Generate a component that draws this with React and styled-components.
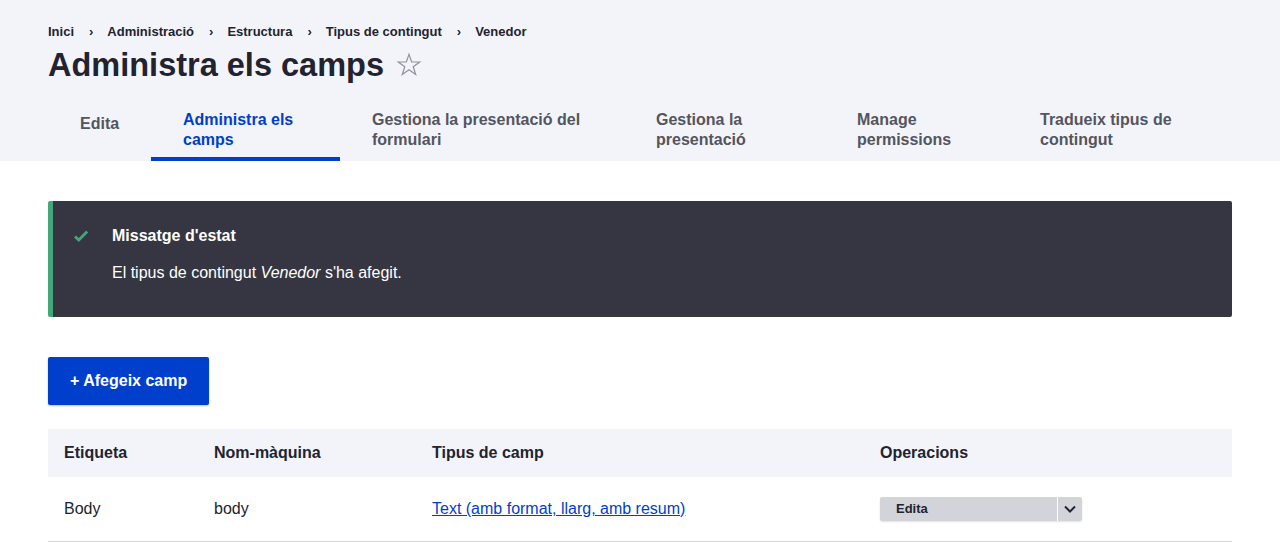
import styled, { createGlobalStyle } from 'styled-components';

const GlobalStyle = createGlobalStyle`
  body {
    margin: 0;
    background: #fff;
    font-family: "Liberation Sans", Arial, sans-serif;
    color: #222330;
  }
`;

const Header = styled.header`
  background: #f3f4f9;
  padding: 22px 48px 0;
`;

const Breadcrumb = styled.nav`
  display: flex;
  align-items: center;
  font-size: 13px;
  font-weight: 700;
  line-height: 20px;
  color: #222330;
`;

const Crumb = styled.span`
  display: flex;
  align-items: center;

  & + &::before {
    content: '›';
    font-weight: 700;
    padding: 0 14px 0 15px;
  }
`;

const TitleRow = styled.div`
  display: flex;
  align-items: center;
  gap: 12px;
  margin-top: 3px;
`;

const Title = styled.h1`
  margin: 0;
  font-size: 32.5px;
  line-height: 40px;
  font-weight: 700;
`;

const Tabs = styled.ul`
  display: flex;
  align-items: flex-start;
  list-style: none;
  margin: 16px 0 0;
  padding: 0;
`;

const Tab = styled.li`
  box-sizing: border-box;
  flex: none;
  width: ${({ $w }) => $w}px;
  min-height: 48px;
  display: flex;
  align-items: center;
  padding: 9px 32px 7px;
  border-bottom: 4px solid ${({ $active }) => ($active ? '#003ecc' : 'transparent')};
  font-size: 16px;
  font-weight: 700;
  line-height: 20px;
  color: ${({ $active }) => ($active ? '#003ecc' : '#545560')};
`;

const Main = styled.main`
  padding: 40px 48px 0;
`;

const Message = styled.div`
  background: #353641;
  border-left: 5px solid #42a877;
  border-radius: 2px;
  padding: 23px 24px 32px 20px;
  color: #fff;
`;

const MessageHead = styled.div`
  display: flex;
  align-items: center;
  gap: 23px;
  font-size: 16px;
  font-weight: 700;
  line-height: 24px;
`;

const MessageBody = styled.p`
  margin: 13px 0 0 39px;
  font-size: 16px;
  line-height: 24px;
`;

const PrimaryButton = styled.button`
  margin-top: 40px;
  height: 48px;
  padding: 0 22px;
  border: 0;
  border-radius: 2px;
  background: #003ecc;
  color: #fff;
  font-family: inherit;
  font-size: 16px;
  font-weight: 700;
  box-shadow: 0 1px 2px rgba(0, 0, 0, 0.25);
`;

const Table = styled.table`
  margin-top: 24px;
  width: 100%;
  border-collapse: collapse;
  font-size: 16px;
`;

const Th = styled.th`
  background: #f3f4f9;
  height: 48px;
  padding: 0 16px;
  text-align: left;
  font-weight: 700;
  width: ${({ $w }) => ($w ? `${$w}px` : 'auto')};
  box-sizing: border-box;
`;

const Td = styled.td`
  height: 64px;
  padding: 0 16px;
  border-bottom: 1px solid #d3d4d9;
  color: #222330;
`;

const Link = styled.a`
  color: #003ecc;
  text-decoration: underline;
`;

const Dropbutton = styled.div`
  display: inline-flex;
  height: 24px;
  border-radius: 2px;
  overflow: hidden;
  box-shadow: 0 1px 2px rgba(0, 0, 0, 0.12);
`;

const DropAction = styled.span`
  width: 161px;
  padding-left: 16px;
  background: #d3d4d9;
  font-size: 13px;
  font-weight: 700;
  line-height: 24px;
  color: #222330;
`;

const DropToggle = styled.span`
  width: 24px;
  margin-left: 1px;
  background: #d3d4d9;
  display: flex;
  align-items: center;
  justify-content: center;
`;

const tabs = [
  { label: 'Edita', w: 103 },
  { label: 'Administra els camps', w: 189, active: true },
  { label: 'Gestiona la presentació del formulari', w: 284 },
  { label: 'Gestiona la presentació', w: 201 },
  { label: 'Manage permissions', w: 183 },
  { label: 'Tradueix tipus de contingut', w: 224 },
];

const App = () => (
  <>
    <GlobalStyle />
    <Header>
      <Breadcrumb>
        {['Inici', 'Administració', 'Estructura', 'Tipus de contingut', 'Venedor'].map((c) => (
          <Crumb key={c}>{c}</Crumb>
        ))}
      </Breadcrumb>
      <TitleRow>
        <Title>Administra els camps</Title>
        <svg width="26" height="26" viewBox="0 0 24 24" fill="none" stroke="#8e929c" strokeWidth="1.1" strokeLinejoin="miter">
          <path d="M12 2.2l2.45 7.05h7.45l-6.02 4.38 2.3 7.1L12 16.3l-6.18 4.43 2.3-7.1-6.02-4.38h7.45z" />
        </svg>
      </TitleRow>
      <Tabs>
        {tabs.map((t) => (
          <Tab key={t.label} $w={t.w} $active={t.active}>
            {t.label}
          </Tab>
        ))}
      </Tabs>
    </Header>
    <Main>
      <Message>
        <MessageHead>
          <svg width="16" height="16" viewBox="0 0 16 16">
            <path d="M2 8.4l3.8 3.6L14.2 3.6" fill="none" stroke="#42a877" strokeWidth="2.8" />
          </svg>
          Missatge d'estat
        </MessageHead>
        <MessageBody>
          El tipus de contingut <em>Venedor</em> s'ha afegit.
        </MessageBody>
      </Message>
      <PrimaryButton>+ Afegeix camp</PrimaryButton>
      <Table>
        <thead>
          <tr>
            <Th $w={150}>Etiqueta</Th>
            <Th $w={218}>Nom-màquina</Th>
            <Th $w={448}>Tipus de camp</Th>
            <Th>Operacions</Th>
          </tr>
        </thead>
        <tbody>
          <tr>
            <Td>Body</Td>
            <Td>body</Td>
            <Td>
              <Link href="#">Text (amb format, llarg, amb resum)</Link>
            </Td>
            <Td>
              <Dropbutton>
                <DropAction>Edita</DropAction>
                <DropToggle>
                  <svg width="14" height="10" viewBox="0 0 14 10">
                    <path d="M2 2.5l5 5 5-5" fill="none" stroke="#222330" strokeWidth="2" />
                  </svg>
                </DropToggle>
              </Dropbutton>
            </Td>
          </tr>
        </tbody>
      </Table>
    </Main>
  </>
);

export default App;
